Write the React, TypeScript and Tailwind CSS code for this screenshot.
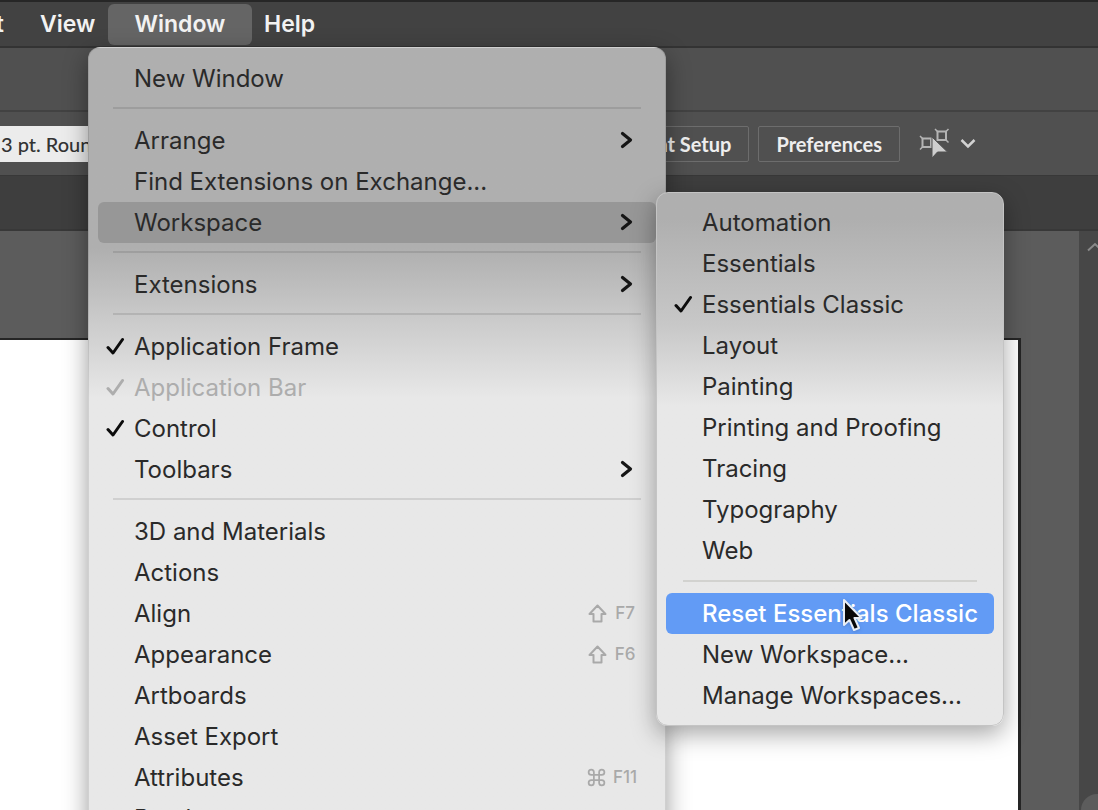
import { Command } from "lucide-react"
import type { ReactNode } from "react"

type MenuEntry = {
  label: string
  checked?: boolean
  disabled?: boolean
  arrow?: boolean
  selected?: boolean
  shortcut?: { modifier: "shift" | "command"; key: string }
}

const windowMenu: MenuEntry[][] = [
  [{ label: "New Window" }],
  [
    { label: "Arrange", arrow: true },
    { label: "Find Extensions on Exchange..." },
    { label: "Workspace", arrow: true },
  ],
  [{ label: "Extensions", arrow: true }],
  [
    { label: "Application Frame", checked: true },
    { label: "Application Bar", checked: true, disabled: true },
    { label: "Control", checked: true },
    { label: "Toolbars", arrow: true },
  ],
  [
    { label: "3D and Materials" },
    { label: "Actions" },
    { label: "Align", shortcut: { modifier: "shift", key: "F7" } },
    { label: "Appearance", shortcut: { modifier: "shift", key: "F6" } },
    { label: "Artboards" },
    { label: "Asset Export" },
    { label: "Attributes", shortcut: { modifier: "command", key: "F11" } },
    { label: "Brushes" },
  ],
]

const workspaces: MenuEntry[] = [
  { label: "Automation" },
  { label: "Essentials" },
  { label: "Essentials Classic", checked: true },
  { label: "Layout" },
  { label: "Painting" },
  { label: "Printing and Proofing" },
  { label: "Tracing" },
  { label: "Typography" },
  { label: "Web" },
]

const workspaceActions: MenuEntry[] = [
  { label: "Reset Essentials Classic", selected: true },
  { label: "New Workspace..." },
  { label: "Manage Workspaces..." },
]

function CheckIcon() {
  return (
    <svg viewBox="0 0 19 19" className="h-[19px] w-[19px]" fill="none" stroke="currentColor" strokeWidth="3" strokeLinecap="round" strokeLinejoin="round">
      <path d="M2 10.500 7 16 16.500 2.500" />
    </svg>
  )
}

function ArrowIcon() {
  return (
    <svg viewBox="0 0 14 19" className="h-[19px] w-[14px]" fill="none" stroke="#151515" strokeWidth="3.200" strokeLinecap="round" strokeLinejoin="round">
      <path d="M3.500 2.500 11.500 9 3.500 15.500" />
    </svg>
  )
}

function ShiftIcon() {
  return (
    <svg viewBox="0 0 19 19" className="h-[19px] w-[19px]" fill="none" stroke="currentColor" strokeWidth="2" strokeLinejoin="round">
      <path d="M9.500 1.500 17.500 10H13.500V17.500H5.500V10H1.500Z" />
    </svg>
  )
}

function SelectSimilarIcon() {
  return (
    <svg viewBox="0 0 32 32" className="h-8 w-8" fill="none" stroke="#b4b4b4" strokeWidth="2">
      <path d="M19.500 3.500H28V12H19.500Z M4.500 10.500H13V19H4.500Z" />
      <path d="M17 1 19.500 3.500M30.500 1 28 3.500M30.500 14.500 28 12M2 8 4.500 10.500M2 21.500 4.500 19" strokeWidth="1.500" />
      <path d="M14 9V30L19.500 24H29.500Z" fill="#cfcfcf" stroke="#505050" strokeWidth="1" />
    </svg>
  )
}

function PointerIcon() {
  return (
    <svg viewBox="0 0 22 36" className="absolute top-1 left-[176px] h-9 w-[22px] drop-shadow" fill="#080808" stroke="#e8edf5" strokeWidth="2" strokeLinejoin="round">
      <path d="M2 3V28L7.500 23 12 33 17 31 12.500 21H19.500Z" />
    </svg>
  )
}

function MenuItem({ item, children }: { item: MenuEntry; children?: ReactNode }) {
  const open = Boolean(children)
  const tone = item.disabled ? "text-[#adadad]" : item.selected ? "text-white font-medium" : "text-[#2a2a2a]"
  const background = open ? "bg-[#979797]" : item.selected ? "bg-[#629bf5]" : ""

  return (
    <li className="relative mx-[9px]">
      <button
        type="button"
        disabled={item.disabled}
        className={`flex h-[41px] w-full items-center rounded-md pr-[23px] text-left text-2xl ${tone} ${background}`}
      >
        <span className={`flex w-9 shrink-0 pl-2 ${item.disabled ? "" : "text-[#0c0c0c]"}`}>
          {item.checked && <CheckIcon />}
        </span>
        <span className="grow whitespace-nowrap">{item.label}</span>
        {item.arrow && <ArrowIcon />}
        {item.shortcut && (
          <span className="-mr-[6px] flex items-center gap-1 text-[#a9a9a9]">
            {item.shortcut.modifier === "shift" ? <ShiftIcon /> : <Command className="h-[21px] w-[21px]" />}
            <span className="w-7 text-center text-[17px] font-medium">{item.shortcut.key}</span>
          </span>
        )}
      </button>
      {children}
      {item.selected && <PointerIcon />}
    </li>
  )
}

function WorkspaceMenu() {
  return (
    <ul className="absolute -top-[10px] left-full w-[348px] rounded-xl border border-[#c4c4c4] bg-linear-to-b from-[#afafaf] from-5% via-[#c8c8c8] via-25% to-[#e8e8e8] to-40% py-[9px] shadow-[0_8px_24px_rgba(0,0,0,0.35)]">
      {workspaces.map((item) => (
        <MenuItem key={item.label} item={item} />
      ))}
      <li role="separator" className="mx-[26px] h-[22px] pt-[9px]">
        <div className="h-[2px] bg-[#d2d2cf]" />
      </li>
      {workspaceActions.map((item) => (
        <MenuItem key={item.label} item={item} />
      ))}
    </ul>
  )
}

function WindowMenu() {
  return (
    <div className="absolute left-[88px] top-[47px] z-10 w-[578px] rounded-xl border border-black/10 bg-linear-to-b from-[#afafaf] from-[200px] via-[#c8c8c8] via-[265px] to-[#e8e8e8] to-[350px] pt-[10px] shadow-[0_8px_24px_rgba(0,0,0,0.4)]">
      {windowMenu.map((group, index) => (
        <div key={group[0].label}>
          {index > 0 && (
            <div role="separator" className="mx-6 h-[21px] pt-2">
              <div className="h-[2px] bg-black/10" />
            </div>
          )}
          <ul>
            {group.map((item) => (
              <MenuItem key={item.label} item={item}>
                {item.label === "Workspace" && <WorkspaceMenu />}
              </MenuItem>
            ))}
          </ul>
        </div>
      ))}
    </div>
  )
}

function MenuBar() {
  return (
    <nav className="flex h-12 items-center border-b-2 border-t-2 border-b-[#333] border-t-[#262626] bg-[#424242] text-[23px] font-semibold text-[#f2f2f2]">
      <a href="#select" className="flex w-1 justify-end overflow-hidden">Select</a>
      <a href="#view" className="ml-9 w-[68px]">View</a>
      <a href="#window" className="flex h-[41px] w-36 items-center justify-center rounded-md bg-[#656565]">Window</a>
      <a href="#help" className="ml-3">Help</a>
    </nav>
  )
}

function ControlBar() {
  return (
    <div className="flex h-[63px] items-center justify-between bg-[#505050] font-[Lato,sans-serif] text-[20px] font-bold text-[#eee]">
      <input
        aria-label="Brush definition"
        defaultValue="3 pt. Round"
        className="h-9 w-40 bg-[#ececec] pl-px font-medium text-[#333]"
      />
      <div className="mr-[122px] flex items-center">
        <button type="button" className="h-9 rounded-xs border border-[#6d6d6d] px-[17px]">Document Setup</button>
        <button type="button" className="ml-[9px] h-9 rounded-xs border border-[#6d6d6d] px-[17px]">Preferences</button>
        <button type="button" aria-label="Select similar objects" className="ml-[18px] flex items-center gap-[10px]">
          <SelectSimilarIcon />
          <svg viewBox="0 0 16 10" className="h-[10px] w-4" fill="none" stroke="#d2d2d2" strokeWidth="2.500">
            <path d="M1.500 1 8 7.500 14.500 1" />
          </svg>
        </button>
      </div>
    </div>
  )
}

export default function App() {
  return (
    <div className="relative flex h-screen flex-col overflow-hidden bg-[#5c5c5c] font-[Inter,sans-serif]">
      <MenuBar />
      <div className="h-16 shrink-0 border-b-2 border-[#424242] bg-[#505050]" />
      <ControlBar />
      <div className="h-14 shrink-0 border-b-2 border-t border-[#383838] bg-[#3e3e3e]" />
      <main className="flex grow">
        <div className="flex grow flex-col pt-[107px]">
          <div className="mr-[58px] grow border-r-[3px] border-t-2 border-[#252525] bg-white" />
        </div>
        <div className="flex w-[19px] flex-col justify-between overflow-hidden bg-[#474747] pt-[11px]">
          <svg viewBox="0 0 16 10" className="ml-2 h-[10px] w-4" fill="none" stroke="#8a8a8a" strokeWidth="2">
            <path d="M1 8.500 8 2 15 8.500" />
          </svg>
          <div className="ml-[2px] h-4 w-8 rounded-t-full bg-[#5c5c5c]" />
        </div>
      </main>
      <WindowMenu />
    </div>
  )
}
